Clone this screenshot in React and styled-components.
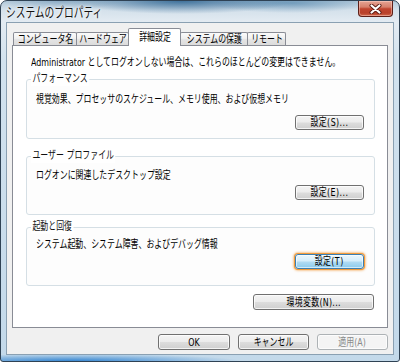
import React from 'react';
import styled, { createGlobalStyle } from 'styled-components';

const GlobalStyle = createGlobalStyle`
  html, body { margin: 0; padding: 0; overflow: hidden; background: #ffffff; }
  body { font-family: "DejaVu Sans", "Noto Sans CJK JP", sans-serif; color: #000; }
  * { box-sizing: border-box; }
`;

const Window = styled.div`
  position: relative;
  width: 400px;
  height: 362px;
  overflow: hidden;
  border: 1px solid #2f4254;
  border-radius: 7px 7px 3px 3px;
  display: flex;
  flex-direction: column;
  padding: 0 5px 6px 5px;
  background:
    radial-gradient(ellipse 170px 7px at 70px 100%, rgba(30, 120, 205, 0.85), rgba(30, 120, 205, 0)),
    radial-gradient(ellipse 110px 13px at 180px 0px, rgba(25, 85, 135, 0.75), rgba(25, 85, 135, 0)),
    radial-gradient(ellipse 80px 10px at 290px 2px, rgba(55, 115, 160, 0.55), rgba(55, 115, 160, 0)),
    radial-gradient(ellipse 60px 9px at 60px 0px, rgba(70, 120, 160, 0.35), rgba(70, 120, 160, 0)),
    linear-gradient(180deg, #b3c9da 0px, #d4e1eb 9px, #e3ebf2 21px, #d2e2ee 60px, #c3d9ea 100%);
`;

const TitleBar = styled.div`
  height: 21px;
  display: flex;
  align-items: flex-start;
  justify-content: space-between;
`;

const TitleText = styled.span`
  display: inline-block;
  white-space: nowrap;
  font-family: "Noto Sans CJK JP", sans-serif;
  font-size: 13.5px;
  line-height: 21px;
  color: #111;
  text-shadow: 0 0 5px rgba(255, 255, 255, 0.95), 0 0 2px rgba(255, 255, 255, 0.9);
  transform: scaleX(0.72);
  transform-origin: left center;
`;

const CloseButton = styled.div`
  width: 35px;
  height: 16px;
  margin-right: 1px;
  display: flex;
  align-items: center;
  justify-content: center;
  border: 1px solid #5c1f18;
  border-top: none;
  border-radius: 0 0 4px 4px;
  background: linear-gradient(180deg, #e6a494 0%, #d6806c 40%, #c0452f 52%, #b8402a 80%, #d0674a 100%);
  box-shadow: inset 0 0 0 1px rgba(255, 220, 210, 0.45);
`;

const Client = styled.div`
  flex: 1;
  display: flex;
  flex-direction: column;
  background: #f0f0f0;
  border: 1px solid #8aa0b2;
  padding: 5px 5px 4px 5px;
`;

const TabStrip = styled.div`
  position: relative;
  z-index: 2;
  height: 18px;
  margin-bottom: -1px;
  padding-left: 1px;
  display: flex;
  align-items: flex-end;
`;

const Tab = styled.div`
  width: ${p => p.$w}px;
  height: ${p => (p.$active ? 18 : 13)}px;
  margin-bottom: ${p => (p.$active ? 0 : 1)}px;
  margin-left: ${p => (p.$first ? 0 : -1)}px;
  display: flex;
  align-items: center;
  justify-content: center;
  border: 1px solid #898c95;
  border-bottom: none;
  border-radius: 2px 2px 0 0;
  position: relative;
  z-index: ${p => (p.$active ? 2 : 1)};
  background: ${p =>
    p.$active
      ? '#ffffff'
      : 'linear-gradient(180deg, #fbfbfb 0%, #f0f0f0 45%, #e4e4e4 55%, #dcdcdc 100%)'};
`;

const Txt = styled.span`
  display: inline-block;
  white-space: nowrap;
  font-size: ${p => p.$size || 11}px;
  line-height: ${p => p.$lh || 14}px;
  color: ${p => p.$color || '#000'};
  letter-spacing: ${p => p.$ls || 0}px;
  transform: scaleX(0.72);
  transform-origin: ${p => (p.$center ? 'center' : 'left')} center;
`;

const Panel = styled.div`
  position: relative;
  height: 283px;
  background: #ffffff;
  border: 1px solid #898c95;
  padding: 5px 12px 0 13px;
  display: flex;
  flex-direction: column;
`;

const Notice = styled.div`
  height: 14px;
  margin-left: 5px;
`;

const Group = styled.div`
  position: relative;
  height: ${p => p.$h}px;
  margin-top: ${p => p.$mt}px;
  border: 1px solid #d5dfe5;
  border-radius: 3px;
  padding: ${p => p.$pt}px 10px 0 9px;
  display: flex;
  flex-direction: column;
  background: #fdfdfd;
`;

const GroupLabel = styled.span`
  position: absolute;
  top: -8px;
  left: 4px;
  padding: 0 2px;
  background: #ffffff;
  display: inline-block;
  white-space: nowrap;
  font-size: 11px;
  line-height: 14px;
  color: #111;
  transform: scaleX(0.72);
  transform-origin: left center;
`;

const Desc = styled.div`
  height: 14px;
`;

const ButtonRow = styled.div`
  display: flex;
  justify-content: flex-end;
  gap: ${p => p.$gap || 0}px;
  margin-top: ${p => p.$mt || 0}px;
  padding-right: ${p => p.$pr || 0}px;
`;

const Btn = styled.div`
  width: ${p => p.$w}px;
  height: ${p => p.$h || 15}px;
  display: flex;
  align-items: center;
  justify-content: center;
  border-radius: 3px;
  border: 1px solid ${p => (p.$hot ? '#3c7fb1' : p.$disabled ? '#adb2b5' : '#707070')};
  background: ${p =>
    p.$hot
      ? 'linear-gradient(180deg, #eaf6fd 0%, #d5eefb 48%, #b2dcf3 52%, #8ccbed 100%)'
      : p.$disabled
      ? '#f4f4f4'
      : 'linear-gradient(180deg, #f4f4f4 0%, #ececec 48%, #dddddd 52%, #cfcfcf 100%)'};
  box-shadow: ${p =>
    p.$hot
      ? 'inset 0 0 0 1px rgba(255,255,255,0.6), 0 0 0 1px #f19b3c, 0 0 2px 2px rgba(242, 160, 70, 0.55)'
      : 'inset 0 0 0 1px rgba(255,255,255,0.75)'};
`;

const groups = [
  {
    label: 'パフォーマンス',
    desc: '視覚効果、プロセッサのスケジュール、メモリ使用、および仮想メモリ',
    btn: '設定(S)...',
    h: 60,
    mt: 14,
    pt: 8,
    gap: 13,
  },
  {
    label: 'ユーザー プロファイル',
    desc: 'ログオンに関連したデスクトップ設定',
    btn: '設定(E)...',
    h: 59,
    mt: 17,
    pt: 7,
    gap: 7,
  },
  {
    label: '起動と回復',
    desc: 'システム起動、システム障害、およびデバッグ情報',
    btn: '設定(T)',
    h: 59,
    mt: 12,
    pt: 5,
    gap: 7,
    hot: true,
  },
];

const tabs = [
  { label: 'コンピュータ名', w: 64 },
  { label: 'ハードウェア', w: 53 },
  { label: '詳細設定', w: 53, active: true },
  { label: 'システムの保護', w: 68 },
  { label: 'リモート', w: 39 },
];

function CloseGlyph() {
  return (
    <svg width="13" height="10" viewBox="0 0 13 10">
      <path d="M2.5 1.5 L10.5 8.5 M10.5 1.5 L2.5 8.5" stroke="#5a1a12" strokeWidth="4" strokeLinecap="round" />
      <path d="M2.5 1.5 L10.5 8.5 M10.5 1.5 L2.5 8.5" stroke="#ffffff" strokeWidth="2.2" strokeLinecap="round" />
    </svg>
  );
}

export default function App() {
  return (
    <>
      <GlobalStyle />
      <Window>
        <TitleBar>
          <TitleText>システムのプロパティ</TitleText>
          <CloseButton>
            <CloseGlyph />
          </CloseButton>
        </TitleBar>
        <Client>
          <TabStrip>
            {tabs.map((t, i) => (
              <Tab key={t.label} $w={t.w} $active={t.active} $first={i === 0}>
                <Txt $center $lh={13}>{t.label}</Txt>
              </Tab>
            ))}
          </TabStrip>
          <Panel>
            <Notice>
              <Txt>Administrator としてログオンしない場合は、これらのほとんどの変更はできません。</Txt>
            </Notice>
            {groups.map(g => (
              <Group key={g.label} $h={g.h} $mt={g.mt} $pt={g.pt}>
                <GroupLabel>{g.label}</GroupLabel>
                <Desc>
                  <Txt>{g.desc}</Txt>
                </Desc>
                <ButtonRow $mt={g.gap}>
                  <Btn $w={69} $hot={g.hot}>
                    <Txt $center $lh={13} $ls={0.6}>{g.btn}</Txt>
                  </Btn>
                </ButtonRow>
              </Group>
            ))}
            <ButtonRow $mt={8} $pr={1}>
              <Btn $w={121} $h={16}>
                <Txt $center $lh={13} $ls={0.4}>環境変数(N)...</Txt>
              </Btn>
            </ButtonRow>
          </Panel>
          <ButtonRow $mt={6} $gap={8}>
            <Btn $w={72} $h={16}>
              <Txt $center $lh={13}>OK</Txt>
            </Btn>
            <Btn $w={71} $h={16}>
              <Txt $center $lh={13}>キャンセル</Txt>
            </Btn>
            <Btn $w={71} $h={16} $disabled>
              <Txt $center $lh={13} $color="#8a8a8a">適用(A)</Txt>
            </Btn>
          </ButtonRow>
        </Client>
      </Window>
    </>
  );
}
